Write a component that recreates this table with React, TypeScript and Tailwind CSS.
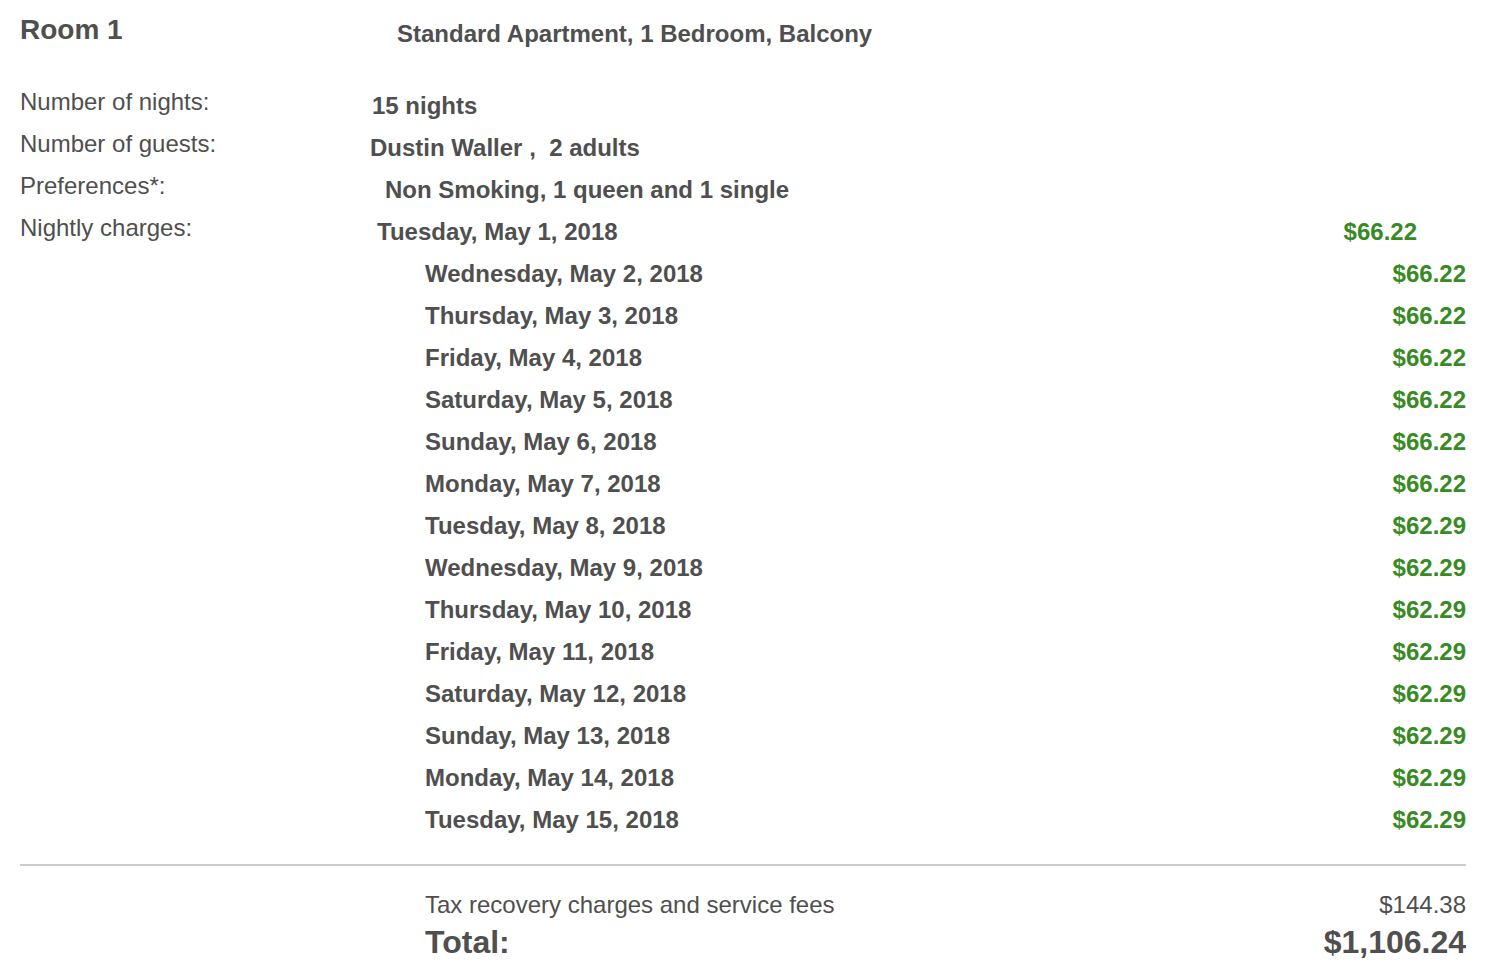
import React from "react";

const nights = [
  { date: "Wednesday, May 2, 2018", price: "$66.22" },
  { date: "Thursday, May 3, 2018", price: "$66.22" },
  { date: "Friday, May 4, 2018", price: "$66.22" },
  { date: "Saturday, May 5, 2018", price: "$66.22" },
  { date: "Sunday, May 6, 2018", price: "$66.22" },
  { date: "Monday, May 7, 2018", price: "$66.22" },
  { date: "Tuesday, May 8, 2018", price: "$62.29" },
  { date: "Wednesday, May 9, 2018", price: "$62.29" },
  { date: "Thursday, May 10, 2018", price: "$62.29" },
  { date: "Friday, May 11, 2018", price: "$62.29" },
  { date: "Saturday, May 12, 2018", price: "$62.29" },
  { date: "Sunday, May 13, 2018", price: "$62.29" },
  { date: "Monday, May 14, 2018", price: "$62.29" },
  { date: "Tuesday, May 15, 2018", price: "$62.29" },
];

const InfoRow = ({
  label,
  children,
}: {
  label: string;
  children: React.ReactNode;
}) => (
  <div className="flex h-[42px]">
    <div className="w-[350px] shrink-0 leading-[42px]">{label}</div>
    <div className="flex-1 pt-[4px] leading-[42px] font-bold">{children}</div>
  </div>
);

const App = () => {
  return (
    <div className="w-[1498px] h-[978px] bg-white pl-[20px] pr-[32px] text-[24px] text-[#4f4f4f] font-['Liberation_Sans','Helvetica',sans-serif] overflow-hidden">
      <div className="flex h-[81px] items-start">
        <div className="w-[350px] shrink-0 mt-[16px] text-[28px] leading-[28px] font-bold">
          Room 1
        </div>
        <div className="ml-[27px] mt-[20px] leading-[28px] font-bold">
          Standard Apartment, 1 Bedroom, Balcony
        </div>
      </div>

      <InfoRow label="Number of nights:">
        <span className="ml-[2px]">15 nights</span>
      </InfoRow>
      <InfoRow label="Number of guests:">
        <span>Dustin Waller ,&nbsp; 2 adults</span>
      </InfoRow>
      <InfoRow label="Preferences*:">
        <span className="ml-[15px]">Non Smoking, 1 queen and 1 single</span>
      </InfoRow>
      <InfoRow label="Nightly charges:">
        <div className="flex justify-between pr-[49px]">
          <span className="ml-[7px]">Tuesday, May 1, 2018</span>
          <span className="text-[#388a24]">$66.22</span>
        </div>
      </InfoRow>

      <div className="pt-[4px] pl-[405px]">
        {nights.map((n) => (
          <div
            key={n.date}
            className="flex justify-between h-[42px] leading-[42px] font-bold"
          >
            <span>{n.date}</span>
            <span className="text-[#388a24]">{n.price}</span>
          </div>
        ))}
      </div>

      <div className="mt-[23px] border-t-2 border-[#cccccc]" />

      <div className="pl-[405px] mt-[24px]">
        <div className="flex justify-between h-[30px] leading-[30px]">
          <span>Tax recovery charges and service fees</span>
          <span>$144.38</span>
        </div>
        <div className="flex justify-between h-[44px] leading-[44px] text-[32px] font-bold">
          <span>Total:</span>
          <span>$1,106.24</span>
        </div>
      </div>
    </div>
  );
};

export default App;
